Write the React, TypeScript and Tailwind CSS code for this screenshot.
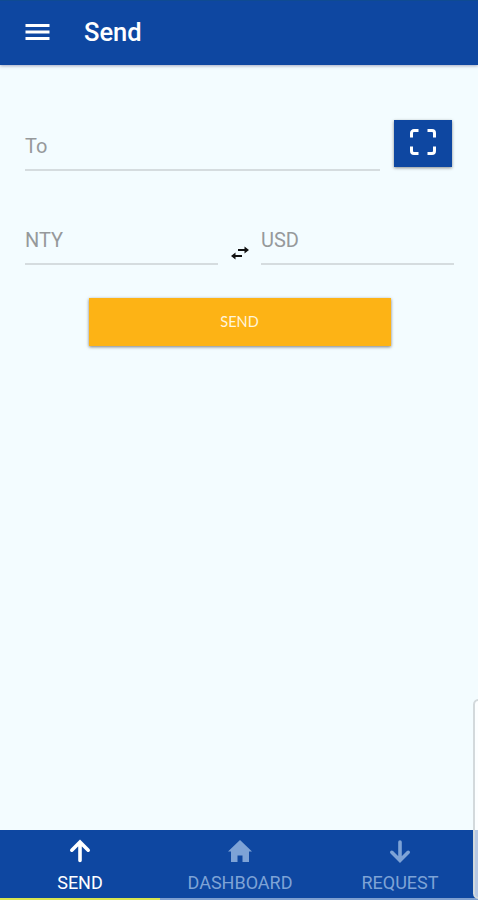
import React from "react";

interface FieldProps {
  label: string;
  className: string;
}

const Field: React.FC<FieldProps> = ({ label, className }) => (
  <label
    className={`block h-[38px] border-b-2 border-[#d5dcdf] text-[20px] leading-[27px] text-[#96999b] ${className}`}
  >
    {label}
  </label>
);

interface TabProps {
  label: string;
  active?: boolean;
  children: React.ReactNode;
}

const Tab: React.FC<TabProps> = ({ label, active, children }) => (
  <button
    type="button"
    className={`flex w-[160px] shrink-0 flex-col items-center border-b-2 pt-[7px] ${
      active ? "border-[#d9e650] text-white" : "border-[#7fa0d0] text-[#7ea3d6]"
    }`}
  >
    <svg
      className="h-[28px] w-[28px]"
      viewBox="0 0 28 28"
      fill="none"
      stroke="currentColor"
      strokeWidth="3.6"
      strokeLinecap="round"
    >
      {children}
    </svg>
    <span className="mt-[8px] text-[18px] leading-[20px]">{label}</span>
  </button>
);

const App: React.FC = () => {
  return (
    <div className="relative flex h-[900px] w-[478px] flex-col overflow-hidden bg-[#f3fcff] font-['Roboto',sans-serif]">
      <header className="flex h-[65px] shrink-0 items-center border-t border-[#0f4b92] bg-[#0e47a1] pb-[2px] pl-[25px] text-white shadow-[0_1px_3px_rgba(20,20,80,0.35)]">
        <svg className="h-[18px] w-[25px]" viewBox="0 0 25 18" fill="currentColor">
          <path d="M.5 1h24v3H.5zM.5 7.500h24v3H.5zM.5 14h24v3H.5z" />
        </svg>
        <h1 className="ml-[34px] text-[25.500px] leading-[30px] font-medium">Send</h1>
      </header>

      <main className="flex-1 pt-[55px] pr-[24px] pl-[25px]">
        <div className="flex items-start justify-between">
          <Field label="To" className="mt-[13px] w-[355px]" />
          <button
            type="button"
            className="mr-[2px] flex h-[47px] w-[58px] items-center justify-center bg-[#0e47a1] pb-[3px] text-white shadow-[0_1px_3px_rgba(0,0,0,0.45)]"
          >
            <svg
              className="h-[28px] w-[28px]"
              viewBox="0 0 28 28"
              fill="none"
              stroke="currentColor"
              strokeWidth="3"
            >
              <path d="M2.500 9.500V5a2.500 2.500 0 0 1 2.500-2.500h4.500M18.500 2.500H23a2.500 2.500 0 0 1 2.500 2.500v4.500M25.500 18.500V23a2.500 2.500 0 0 1-2.500 2.500h-4.500M9.500 25.500H5A2.500 2.500 0 0 1 2.500 23v-4.500" />
            </svg>
          </button>
        </div>

        <div className="mt-[56px] flex items-start justify-between">
          <Field label="NTY" className="w-[193px]" />
          <svg className="mt-[19px] h-[14px] w-[18px]" viewBox="0 0 18 14" fill="#111111">
            <path d="M18 4l-4.500-3.500v2.400H7v2.200h6.500v2.400zM0 10l4.500-3.500v2.400H11v2.200H4.500v2.400z" />
          </svg>
          <Field label="USD" className="w-[193px]" />
        </div>

        <button
          type="button"
          className="mx-auto mt-[33px] block h-[48px] w-[302px] bg-[#fdb315] font-['Lato',sans-serif] text-[14.500px] font-normal text-[#fff5dc] shadow-[0_1px_3px_rgba(0,0,0,0.5)]"
        >
          SEND
        </button>
      </main>

      <nav className="flex h-[70px] shrink-0 bg-[#0e47a1]">
        <Tab label="SEND" active>
          <path d="M14 23.500V5.500M5.800 13.200L14 5l8.200 8.200" />
        </Tab>
        <Tab label="DASHBOARD">
          <path
            fill="currentColor"
            stroke="none"
            d="M14 3L2 14.500H5V25h6.500v-6.500h5V25H23V14.500h3z"
          />
        </Tab>
        <Tab label="REQUEST">
          <path d="M14 5v18M5.800 15.300L14 23.500l8.200-8.200" />
        </Tab>
      </nav>

      {/* edge panel handle, overlaps the right side of the screen */}
      <div className="absolute top-[699px] -right-[6px] h-[200px] w-[11px] rounded-[6px] border-2 border-[#d3d9dc] bg-white/70" />
    </div>
  );
};

export default App;
